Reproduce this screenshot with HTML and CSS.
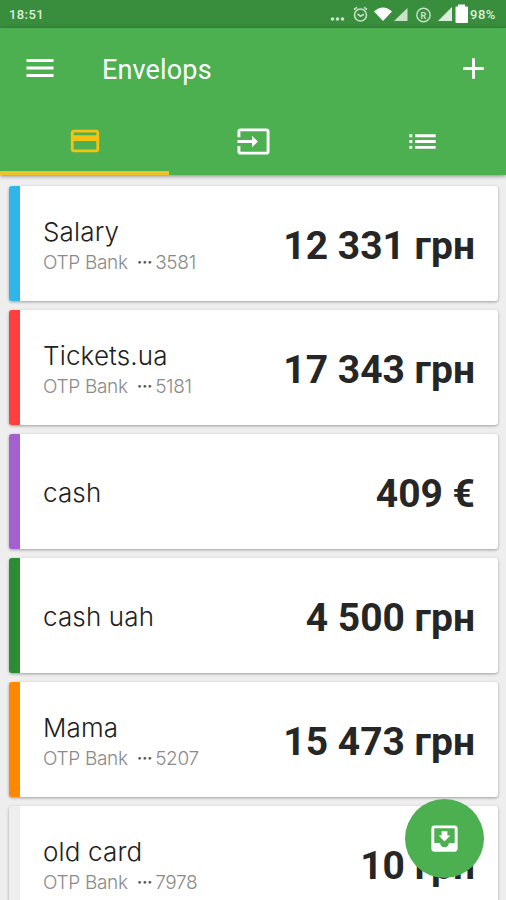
FILE: index.html
```html
<!DOCTYPE html>
<html lang="en">

<head>
    <meta charset="UTF-8">
    <meta name="viewport" content="width=device-width, initial-scale=1.0">
    <title>Envelops</title>
    <link rel="stylesheet" href="styles.css">
</head>

<body>
    <div class="status-bar">
        <span class="time">18:51</span>
        <svg class="status-icons" width="138" height="28" viewBox="0 0 138 28">
            <g fill="#cfe6d0">
                <circle cx="2.500" cy="19" r="1.800" />
                <circle cx="7.500" cy="19" r="1.800" />
                <circle cx="12.500" cy="19" r="1.800" />
            </g>
            <!-- alarm -->
            <g fill="none" stroke="#c5e1c6" stroke-width="1.600">
                <circle cx="30.500" cy="15" r="6" />
                <path d="M24 9.500l3-2.200M37 9.500l-3-2.200M27.500 14l3 2.200 3.500-2" />
            </g>
            <!-- wifi -->
            <path fill="#fff" d="M44 11.500Q53 3.500 62 11.500L53 21z" />
            <path fill="#c8e3c9" d="M77.500 8v13H64z" />
            <circle cx="93.500" cy="15" r="6.700" fill="none" stroke="#c5e1c6" stroke-width="1.400" />
            <text class="reg" x="93.500" y="18.500" text-anchor="middle">R</text>
            <path fill="#dceedd" d="M122 7v14H108z" />
            <!-- battery -->
            <path fill="#fff" d="M128 4.500h7v2h2q1 0 1 1v14.500q0 1-1 1h-10.500q-1 0-1-1v-14.500q0-1 1-1h1.500z" />
        </svg>
        <span class="percent">98%</span>
    </div>

    <header class="header">
        <div class="toolbar">
            <svg class="menu" width="36" height="36" viewBox="0 0 24 24"><path d="M3 18h18v-2H3v2zm0-5h18v-2H3v2zm0-7v2h18V6H3z" /></svg>
            <h1>Envelops</h1>
            <svg class="add" width="35" height="35" viewBox="0 0 24 24"><path d="M19 13h-6v6h-2v-6H5v-2h6V5h2v6h6v2z" /></svg>
        </div>
        <nav class="tabs">
            <div class="tab active">
                <svg width="34" height="34" viewBox="0 0 24 24"><path d="M20 4H4c-1.110 0-1.990.890-1.990 2L2 18c0 1.110.890 2 2 2h16c1.110 0 2-.890 2-2V6c0-1.110-.890-2-2-2zm0 14H4v-6h16v6zm0-10H4V6h16v2z" /></svg>
            </div>
            <div class="tab">
                <svg width="35" height="35" viewBox="0 0 24 24"><path d="M21 3.010H3c-1.100 0-2 .900-2 2V9h2V4.990h18v14.030H3V15H1v4.010c0 1.100.900 1.980 2 1.980h18c1.100 0 2-.880 2-1.980v-14c0-1.110-.900-2-2-2zM11 16l4-4-4-4v3H1v2h10v3z" /></svg>
            </div>
            <div class="tab">
                <svg width="35" height="35" viewBox="0 0 24 24"><path d="M3 13h2v-2H3v2zm0 4h2v-2H3v2zm0-8h2V7H3v2zm4 4h14v-2H7v2zm0 4h14v-2H7v2zM7 7v2h14V7H7z" /></svg>
            </div>
        </nav>
    </header>

    <main class="list">
        <div class="card blue">
            <div class="info">
                <div class="name">Salary</div>
                <div class="bank">OTP Bank <span class="dots">•••</span>3581</div>
            </div>
            <div class="sum">12 331 грн</div>
        </div>
        <div class="card red">
            <div class="info">
                <div class="name">Tickets.ua</div>
                <div class="bank">OTP Bank <span class="dots">•••</span>5181</div>
            </div>
            <div class="sum">17 343 грн</div>
        </div>
        <div class="card purple">
            <div class="info">
                <div class="name">cash</div>
            </div>
            <div class="sum">409 €</div>
        </div>
        <div class="card green">
            <div class="info">
                <div class="name">cash uah</div>
            </div>
            <div class="sum">4 500 грн</div>
        </div>
        <div class="card orange">
            <div class="info">
                <div class="name">Mama</div>
                <div class="bank">OTP Bank <span class="dots">•••</span>5207</div>
            </div>
            <div class="sum">15 473 грн</div>
        </div>
        <div class="card gray">
            <div class="info">
                <div class="name">old card</div>
                <div class="bank">OTP Bank <span class="dots">•••</span>7978</div>
            </div>
            <div class="sum">10 грн</div>
        </div>
    </main>

    <div class="fab">
        <svg width="35" height="35" viewBox="0 0 24 24"><path d="M19 3H4.990c-1.110 0-1.980.900-1.980 2L3 19c0 1.100.880 2 1.990 2H19c1.100 0 2-.900 2-2V5c0-1.100-.900-2-2-2zm0 12h-4c0 1.660-1.350 3-3 3s-3-1.340-3-3H4.990V5H19v10zm-3-5h-2V7h-4v3H8l4 4 4-4z" /></svg>
    </div>
</body>

</html>
```

FILE: styles.css
```css
* {
    margin: 0;
    padding: 0;
    box-sizing: border-box;
}

body {
    height: 900px;
    overflow: hidden;
    background: #eee;
    font-family: Roboto, "Liberation Sans", sans-serif;
}

svg {
    display: block;
    flex: none;
}

.status-bar {
    display: flex;
    align-items: center;
    height: 28px;
    padding: 0 8px 0 9px;
    background: #388e3c;
    color: #dceedd;
    font-size: 13px;
    font-weight: 500;
    line-height: 28px;
    white-space: nowrap;
}

.time {
    padding-top: 2px;
    letter-spacing: 0.4px;
}

.status-icons {
    margin-left: auto;
}

.reg {
    fill: #c5e1c6;
    font-size: 9px;
    font-weight: 700;
}

.percent {
    width: 28px;
    padding-top: 2px;
    margin-left: 2px;
    letter-spacing: 0.5px;
}

.header {
    position: relative;
    height: 147px;
    background: #4caf50;
    box-shadow: 0 1px 4px rgba(0, 0, 0, 0.45);
    fill: #fff;
}

.toolbar {
    display: flex;
    align-items: center;
    height: 80px;
    padding: 0 15px 0 22px;
}

.toolbar h1 {
    padding-top: 3px;
    margin-left: 44px;
    color: #fff;
    font-size: 27px;
    font-weight: 400;
    letter-spacing: 0.15px;
}

.add {
    margin-left: auto;
}

.tabs {
    display: flex;
    height: 67px;
}

.tab {
    display: flex;
    flex: 1;
    justify-content: center;
    align-items: center;
    padding: 3px 0 0 1px;
    border-bottom: 4px solid transparent;
}

.tab.active {
    border-bottom-color: #eec22b;
    fill: #f5c211;
}

.list {
    display: flex;
    flex-direction: column;
    gap: 9px;
    padding: 11px 8px 0 9px;
}

.card {
    display: flex;
    flex: none;
    justify-content: space-between;
    align-items: center;
    height: 115px;
    padding: 2px 23px 0;
    border-left: 11px solid #eee;
    border-radius: 3px;
    background: #fff;
    box-shadow: 0 1px 3px rgba(0, 0, 0, 0.35);
}

.blue {
    border-left-color: #2fb5e9;
}

.red {
    border-left-color: #fd3f3f;
}

.purple {
    border-left-color: #a65fd0;
}

.green {
    border-left-color: #2b8c31;
}

.orange {
    border-left-color: #ff8800;
}

.gray {
    border-left-color: #eee;
}

.name {
    color: #212121;
    font-family: Inter, Roboto, sans-serif;
    font-size: 26px;
    font-weight: 300;
    line-height: 34px;
    letter-spacing: 0.15px;
}

.bank {
    padding-top: 1px;
    margin-bottom: -3px;
    color: #8a8a8a;
    font-family: Inter, Roboto, sans-serif;
    font-size: 19px;
    font-weight: 300;
    line-height: 26px;
    letter-spacing: -0.3px;
}

.dots {
    position: relative;
    top: -4px;
    margin: 0 3px 0 4px;
    color: #555;
    font-size: 10px;
    letter-spacing: -0.5px;
}

.sum {
    padding-top: 2px;
    color: #262626;
    font-size: 39px;
    font-weight: 700;
    white-space: nowrap;
}

/* floating button */
.fab {
    position: absolute;
    top: 799px;
    left: 405px;
    display: flex;
    justify-content: center;
    align-items: center;
    width: 79px;
    height: 79px;
    border-radius: 50%;
    background: #4caf50;
    fill: #fff;
}
```
